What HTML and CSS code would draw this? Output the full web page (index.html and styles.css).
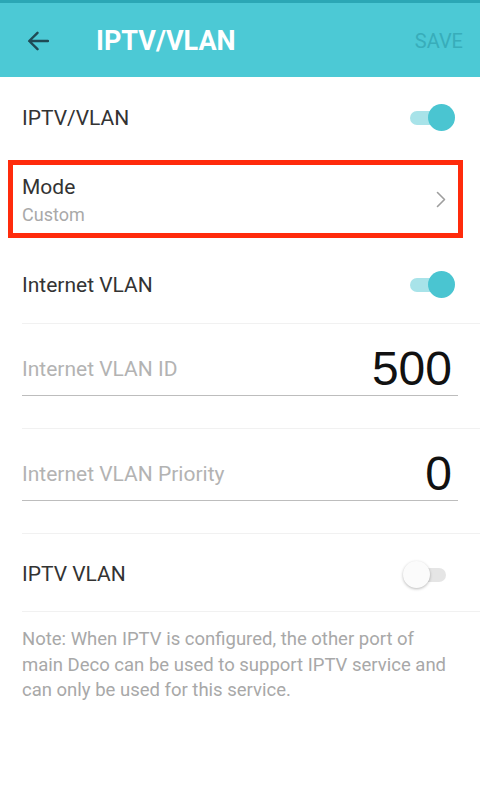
FILE: index.html
```
<!DOCTYPE html>
<html lang="en">
<head>
<meta charset="utf-8">
<title>IPTV/VLAN</title>
<link rel="stylesheet" href="styles.css">
</head>
<body>
<header class="appbar">
  <span class="back">
    <svg width="22" height="20" viewBox="0 0 22 20"><path d="M21 10H2.5M10.5 1.8L2.2 10l8.3 8.2" fill="none" stroke="#1f4a55" stroke-width="2.4" stroke-linecap="round" stroke-linejoin="round"/></svg>
  </span>
  <h1 class="title">IPTV/VLAN</h1>
  <span class="save">SAVE</span>
</header>
<main class="list">
  <div class="row row-top">
    <span class="label">IPTV/VLAN</span>
    <span class="switch on"><span class="track"></span><span class="thumb"></span></span>
  </div>
  <div class="mode-box">
    <div class="mode-text">
      <div class="mode-label">Mode</div>
      <div class="mode-value">Custom</div>
    </div>
    <svg class="chev" width="10" height="17" viewBox="0 0 10 17"><path d="M1.5 1.5L8.5 8.5L1.5 15.5" fill="none" stroke="#9e9e9e" stroke-width="1.6" stroke-linecap="round" stroke-linejoin="round"/></svg>
  </div>
  <div class="row row-internet">
    <span class="label">Internet VLAN</span>
    <span class="switch on"><span class="track"></span><span class="thumb"></span></span>
  </div>
  <div class="row field-row">
    <div class="field">
      <span class="placeholder">Internet VLAN ID</span>
      <span class="value">500</span>
    </div>
  </div>
  <div class="row field-row">
    <div class="field">
      <span class="placeholder">Internet VLAN Priority</span>
      <span class="value">0</span>
    </div>
  </div>
  <div class="row row-iptv">
    <span class="label">IPTV VLAN</span>
    <span class="switch off"><span class="track"></span><span class="thumb"></span></span>
  </div>
  <p class="note">Note: When IPTV is configured, the other port of main Deco can be used to support IPTV service and can only be used for this service.</p>
</main>
</body>
</html>
```

FILE: styles.css
```
* { box-sizing: border-box; }
html, body { margin: 0; padding: 0; background: #fff; }
body { font-family: Roboto, "Noto Sans", sans-serif; width: 480px; }

.appbar {
  height: 77px;
  border-top: 3px solid #2ba7b5;
  padding-top: 2px;
  background: #4cc9d5;
  display: flex;
  align-items: center;
  padding-left: 27px;
  padding-right: 17px;
}
.back { display: flex; width: 22px; margin-right: 47px; }
.title {
  flex: 1;
  margin: 0;
  font-size: 27px;
  font-weight: 700;
  color: #fff;
}
.save { font-size: 20px; color: #38adba; }

.list { display: block; }
.row {
  margin-left: 22px;
  padding-right: 25px;
  display: flex;
  align-items: center;
  justify-content: space-between;
}
.label { font-size: 21px; color: #333; }
.row-top { height: 81px; }
.row-internet {
  height: 86px;
  padding-top: 8px;
  border-bottom: 1px solid #f1f1f1;
}
.row-iptv {
  height: 78px;
  padding-top: 3px;
  border-bottom: 1px solid #f1f1f1;
}

.mode-box {
  margin: 2px 17px 0 8px;
  height: 78px;
  border: 5px solid #ff2b0c;
  display: flex;
  justify-content: space-between;
  padding-left: 9px;
  padding-right: 12px;
}
.mode-text { padding-top: 10px; }
.mode-label { font-size: 21px; line-height: 25px; color: #333; }
.mode-value { font-size: 18px; line-height: 23px; color: #a9a9a9; margin-top: 3px; }
.chev { align-self: center; }

.field-row {
  display: block;
  padding: 21px 22px 32px 0;
  border-bottom: 1px solid #f1f1f1;
}
.field {
  display: flex;
  align-items: center;
  justify-content: space-between;
  padding-bottom: 2px;
  border-bottom: 1px solid #bdbdbd;
}
.placeholder { font-size: 21px; color: #b3b3b3; }
.value {
  font-family: "Liberation Sans", Arial, sans-serif;
  font-size: 48px;
  line-height: 48px;
  color: #111;
  padding-right: 6px;
}

.switch {
  position: relative;
  width: 48px;
  height: 27px;
  flex: none;
}
.switch .track {
  position: absolute;
  left: 3px;
  right: 5px;
  top: 7px;
  height: 14px;
  border-radius: 7px;
}
.switch .thumb {
  position: absolute;
  top: 0;
  width: 27px;
  height: 27px;
  border-radius: 50%;
}
.switch.on .track { background: #a8e3e9; }
.switch.on .thumb { right: 0; background: #4ac5d1; }
.switch.off { margin-right: 4px; }
.switch.off .track { background: #e5e5e5; }
.switch.off .thumb { left: 0; background: #fbfbfb; box-shadow: 0 1px 3px rgba(0,0,0,0.28); }

.note {
  margin: 0 0 0 22px;
  padding: 15px 22px 0 0;
  font-size: 18.5px;
  line-height: 25.5px;
  color: #a8a8a8;
}
```
